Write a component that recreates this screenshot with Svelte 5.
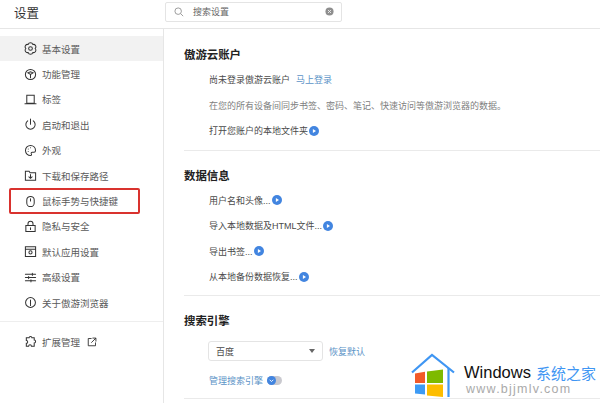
<script>
  const nav = [
    { label: '基本设置', icon: 'gear', active: true },
    { label: '功能管理', icon: 'cube' },
    { label: '标签', icon: 'tab' },
    { label: '启动和退出', icon: 'power' },
    { label: '外观', icon: 'palette' },
    { label: '下载和保存路径', icon: 'folder' },
    { label: '鼠标手势与快捷键', icon: 'mouse', marked: true },
    { label: '隐私与安全', icon: 'lock' },
    { label: '默认应用设置', icon: 'app' },
    { label: '高级设置', icon: 'sliders' },
    { label: '关于傲游浏览器', icon: 'info' }
  ];
  const icons = {
    gear: 'M9.500 2.670A2.600 2.600 0 0 1 12 7 2.600 2.600 0 0 1 9.500 11.330 2.600 2.600 0 0 1 4.500 11.330 2.600 2.600 0 0 1 2 7 2.600 2.600 0 0 1 4.500 2.670 2.600 2.600 0 0 1 9.500 2.670z M7 5a2 2 0 1 0 0 4 2 2 0 0 0 0-4z',
    cube: 'M7 1.500a5.500 5.500 0 1 0 0 11 5.500 5.500 0 0 0 0-11z M4.200 5.200 7 7l2.800-1.800L7 4z M7 7v3.400',
    tab: 'M3 2.500h8v8.500H3z M1 11.500h12',
    power: 'M7 1.200v5.600 M4 3.100a5 5 0 1 0 6 0',
    palette: 'M7 1.600a5.400 5.400 0 0 0 0 10.800c1.400 0 1.300-1.100.9-1.700-.5-.9 0-1.700 1-1.700h1.800c1 0 1.700-.8 1.700-2C12.400 3.700 10 1.600 7 1.600z M4.600 5.500h.01 M7 4h.01 M4.500 8h.01',
    folder: 'M1.500 2.500h4l1 1.500h6v8h-11z M7 6v4 M5.300 8.500 7 10l1.700-1.500',
    mouse: 'M7 1.500a4 4 0 0 0-4 4v3a4 4 0 0 0 8 0v-3a4 4 0 0 0-4-4z M7 4v2.500',
    lock: 'M2 6h10v6.500H2z M4.300 6V4a2.700 2.700 0 0 1 5.400 0v2 M7 8.300v1.800',
    app: 'M1.500 2h11v10.500h-11z M1.500 4.500h11 M7 6.300a1.700 1.700 0 1 0 0 3.400 1.700 1.700 0 0 0 0-3.400z',
    sliders: 'M1.500 3.500h11 M1.500 7h11 M1.500 10.500h11 M9 2.300v2.400 M5 5.800v2.400 M7.500 9.300v2.400',
    info: 'M7 1.700a5.300 5.300 0 1 0 0 10.600 5.300 5.300 0 0 0 0-10.600z M7 4.200v4.400 M7 9.400v.8'
  };
  const data = ['用户名和头像...', '导入本地数据及HTML文件...', '导出书签...', '从本地备份数据恢复...'];
</script>

{#snippet arrow()}
  <svg class="arrow" viewBox="0 0 10 10" aria-hidden="true">
    <circle cx="5" cy="5" r="5" fill="#4285e0" />
    <path d="M3.900 2.900 7 5 3.900 7.100z" fill="#fff" />
  </svg>
{/snippet}

<div class="page">
  <header>
    <div class="title">设置</div>
    <div class="search">
      <svg class="glass" viewBox="0 0 12 12" aria-hidden="true">
        <circle cx="5" cy="5" r="3.900" />
        <path d="m8 8 3 3" />
      </svg>
      <span class="placeholder">搜索设置</span>
      <svg class="clear" viewBox="0 0 10 10" aria-hidden="true">
        <circle cx="5" cy="5" r="4.500" fill="#8e8e8e" />
        <path d="m3.300 3.300 3.400 3.400m0-3.400L3.300 6.700" stroke="#eee" stroke-width="1" />
      </svg>
    </div>
  </header>

  <div class="body">
    <aside>
      <nav>
        {#each nav as item}
          <div class="item" class:active={item.active} class:marked={item.marked}>
            <svg class="icon" viewBox="0 0 14 14" aria-hidden="true"><path d={icons[item.icon]} /></svg>
            <span>{item.label}</span>
          </div>
        {/each}
      </nav>
      <div class="item ext">
        <svg class="icon" viewBox="0 0 14 14" aria-hidden="true">
          <path d="M5.500 3a1.500 1.500 0 0 1 3 0h2.500v2.500a1.500 1.500 0 0 1 0 3V12H8a1.500 1.500 0 0 0-3 0H2.500V9a1.500 1.500 0 0 0 0-3V3z" />
        </svg>
        <span>扩展管理</span>
        <svg class="icon out" viewBox="0 0 12 12" aria-hidden="true">
          <path d="M5 1.800H1.500v8.700h8.700V7 M7 1.300h3.700V5 M10.500 1.500 5.500 6.500" />
        </svg>
      </div>
    </aside>

    <main>
      <section class="first">
        <h2>傲游云账户</h2>
        <div class="row">尚未登录傲游云账户<a class="link login">马上登录</a></div>
        <div class="row muted">在您的所有设备间同步书签、密码、笔记、快速访问等傲游浏览器的数据。</div>
        <div class="row">打开您账户的本地文件夹{@render arrow()}</div>
      </section>
      <section>
        <h2>数据信息</h2>
        {#each data as d}
          <div class="row">{d}{@render arrow()}</div>
        {/each}
      </section>
      <section class="last">
        <h2>搜索引擎</h2>
        <div class="engine">
          <div class="select"><span>百度</span><i></i></div>
          <a class="link">恢复默认</a>
        </div>
        <div class="manage">
          <a class="link">管理搜索引擎</a>
          <span class="toggle">
            <svg viewBox="0 0 10 10" aria-hidden="true">
              <circle cx="5" cy="5" r="5" fill="#4285e0" />
              <path d="M3 4.200 5 6.200l2-2" fill="none" stroke="#fff" stroke-width="1" />
            </svg>
          </span>
        </div>
      </section>
    </main>
  </div>

  <div class="mark">
    <svg class="house" viewBox="0 0 44 44" aria-hidden="true">
      <path d="M1 19.500 21 2l22 17.500" fill="none" stroke="#3f96f3" stroke-width="2.200" />
      <path d="M37.500 15v29" fill="none" stroke="#3f96f3" stroke-width="2.200" />
      <path d="M4 20.500 14 18.800V30H4z" fill="#f25a29" />
      <path d="M16 18.400 32 16.500V30H16z" fill="#7eba00" />
      <path d="M4 31.500H14V41.500L4 40.500z" fill="#3d9bf5" />
      <path d="M16 31.500H32V44L16 42.500z" fill="#fdbd00" />
    </svg>
    <div class="words">
      <div class="brand"><b>Windows</b> <em>系统之家</em></div>
      <div class="url">www.bjjmlv.com</div>
    </div>
  </div>
</div>

<style>
  :global(body) {
    margin: 0;
    background: #fff;
  }
  .page {
    position: relative;
    width: 600px;
    height: 403px;
    overflow: hidden;
    background: #fff;
    color: #4a4a4a;
    font-family: "Liberation Sans", "Noto Sans CJK SC", sans-serif;
    font-size: 9px;
  }
  header {
    display: flex;
    align-items: center;
    height: 29px;
    box-sizing: border-box;
    border-bottom: 1px solid #e6e6e6;
  }
  .title {
    width: 165px;
    padding: 0 0 3px 14px;
    box-sizing: border-box;
    font-size: 12.500px;
    color: #333;
  }
  .search {
    display: flex;
    align-items: center;
    width: 177px;
    height: 20px;
    margin-top: -5px;
    box-sizing: border-box;
    border: 1px solid #e4e4e4;
    border-radius: 2px;
    padding: 0 8px;
    color: #666;
  }
  .glass {
    width: 10px;
    height: 10px;
    fill: none;
    stroke: #8a8a8a;
    stroke-width: 1;
  }
  .placeholder {
    margin-left: 9px;
    flex: 1;
  }
  .clear {
    width: 9px;
    height: 9px;
    margin-right: -1px;
  }
  .body {
    display: flex;
    height: 374px;
  }
  aside {
    width: 164px;
    flex: none;
    box-sizing: border-box;
    border-right: 1px solid #e6e6e6;
    padding-top: 7px;
  }
  nav {
    border-bottom: 1px solid #eee;
    padding-bottom: 6px;
  }
  .item {
    position: relative;
    display: flex;
    align-items: center;
    height: 25.400px;
    padding-left: 24px;
    font-size: 9.500px;
    color: #5a5a5a;
  }
  .item.active {
    background: #f2f2f2;
  }
  .item.marked::after {
    content: "";
    position: absolute;
    left: 9px;
    top: 0;
    width: 131px;
    height: 26px;
    box-sizing: border-box;
    border: 2px solid #d9322e;
    border-radius: 2px;
  }
  .icon {
    width: 13px;
    height: 13px;
    margin-right: 5px;
    fill: none;
    stroke: #333;
    stroke-width: 1.100;
    stroke-linecap: round;
    flex: none;
  }
  .ext {
    margin-top: 7px;
  }
  .out {
    width: 10px;
    height: 10px;
    margin: 0 0 0 7px;
  }
  main {
    flex: 1;
    padding-left: 20px;
    min-width: 0;
  }
  section {
    border-bottom: 1px solid #eaeaea;
    padding: 15px 0 5.500px;
  }
  section.first {
    padding: 16px 0 6px;
  }
  section.last {
    padding-bottom: 12px;
  }
  h2 {
    margin: 0;
    padding: 2px 0 3px;
    font-size: 11.400px;
    line-height: 17px;
    font-weight: 700;
    color: #222;
  }
  .row {
    display: flex;
    align-items: center;
    height: 25.500px;
    padding-left: 25px;
    color: #4a4a4a;
    white-space: nowrap;
  }
  .muted {
    color: #808080;
  }
  .link {
    color: #5b93c7;
  }
  .login {
    margin-left: 6px;
  }
  .arrow {
    width: 10px;
    height: 10px;
    margin-left: 1px;
  }
  .engine {
    display: flex;
    align-items: center;
    gap: 6px;
    margin: 8px 0 0 24px;
  }
  .select {
    display: flex;
    align-items: center;
    justify-content: space-between;
    width: 115px;
    height: 20px;
    box-sizing: border-box;
    border: 1px solid #e4e4e4;
    border-radius: 3px;
    padding: 0 7px;
    color: #4a4a4a;
  }
  .select i {
    width: 0;
    height: 0;
    border: 3px solid transparent;
    border-top: 4px solid #666;
    border-bottom: 0;
  }
  .manage {
    display: flex;
    align-items: center;
    gap: 4px;
    margin: 13px 0 0 25px;
    height: 12px;
  }
  .toggle {
    display: flex;
    width: 15px;
    height: 9px;
    border-radius: 5px;
    background: #c9c9cf;
    align-items: center;
  }
  .toggle svg {
    width: 9px;
    height: 9px;
  }
  .mark {
    position: absolute;
    left: 411px;
    top: 353px;
    display: flex;
    gap: 9px;
  }
  .house {
    width: 44px;
    height: 44px;
    flex: none;
  }
  .words {
    padding-top: 11px;
    white-space: nowrap;
  }
  .brand {
    display: flex;
    align-items: center;
    gap: 5px;
    height: 16px;
    font-family: "Liberation Sans", sans-serif;
    font-size: 16.500px;
    color: #111;
  }
  .brand b {
    font-weight: 400;
  }
  .brand em {
    font-style: normal;
    font-family: "Noto Sans CJK SC", sans-serif;
    font-size: 15px;
    color: #3f96f3;
  }
  .url {
    margin: 2px 0 0 2px;
    font-family: "Liberation Sans", sans-serif;
    font-size: 12.500px;
    letter-spacing: 1.250px;
    color: #aaa;
  }
</style>
